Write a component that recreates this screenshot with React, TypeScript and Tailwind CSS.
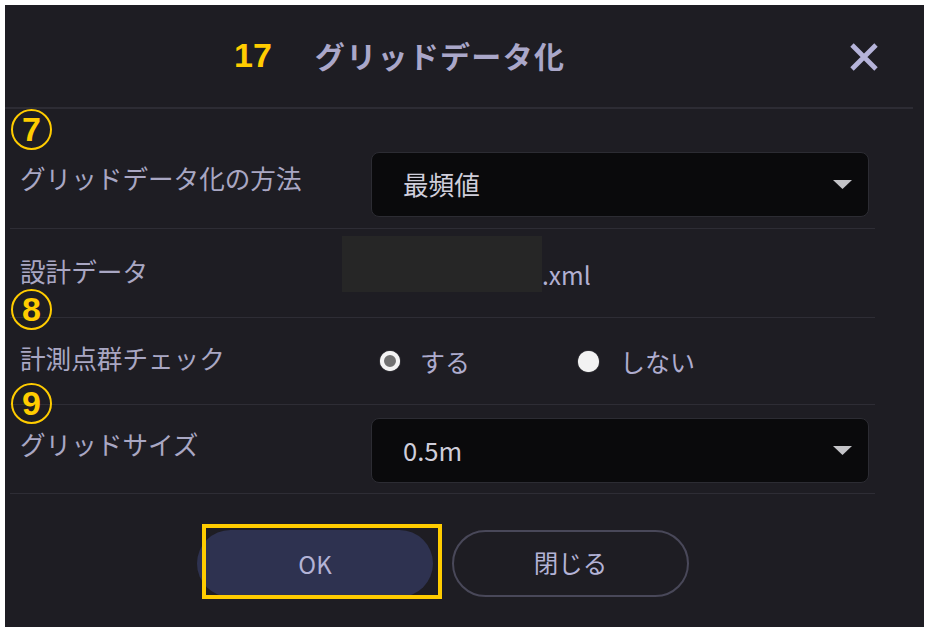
import React from "react";

const JP = { fontFamily: '"Noto Sans CJK JP", "Noto Sans", sans-serif' };

function Circled({ n, top }: { n: string; top: string }) {
  return (
    <div
      className={`absolute left-[6px] ${top} w-[41px] h-[41px] rounded-full border-2 border-[#ffcc00] flex items-center justify-center text-[#ffcc00] text-[34px] font-bold leading-none`}
      style={{ fontFamily: '"Liberation Sans", Arial, sans-serif' }}
    >
      <span className="-mt-[1px]">{n}</span>
    </div>
  );
}

function Caret() {
  return (
    <svg width="19" height="9" viewBox="0 0 19 9" className="shrink-0">
      <polygon points="0,0 19,0 9.5,9" fill="#c4c4c8" />
    </svg>
  );
}

function Select({ value }: { value: string }) {
  return (
    <div className="w-[498px] h-[65px] rounded-[8px] border border-[#2c2c33] bg-[#0a0a0c] flex items-center pl-[31px] pr-[16px]">
      <span className="flex-1 text-[25.6px] text-[#cfcedb] leading-none">{value}</span>
      <Caret />
    </div>
  );
}

export default function App() {
  return (
    <div className="w-[929px] h-[631px] bg-white pt-[5px] pl-[5px]" style={JP}>
      <div className="relative w-[919px] h-[622px] bg-[#1e1d23] flex flex-col">
        {/* header */}
        <div className="h-[104px] shrink-0 mr-[11px] border-b-2 border-[#2d2c34] flex items-center pl-[229px] pb-[3px]">
          <span
            className="text-[#ffcc00] text-[34px] font-bold leading-none"
            style={{ fontFamily: '"Liberation Sans", Arial, sans-serif' }}
          >
            17
          </span>
          <span className="ml-[43px] text-[#aaa7c9] text-[30px] font-bold leading-none tracking-[1.3px]">
            グリッドデータ化
          </span>
          <div className="flex-1" />
          <svg width="32" height="32" viewBox="0 0 32 32" className="mr-[33px] mt-[4px]">
            <path d="M4 4 L28 28 M28 4 L4 28" stroke="#b5b3d9" strokeWidth="4.8" strokeLinecap="butt" />
          </svg>
        </div>

        {/* rows */}
        <div className="ml-[5px] w-[865px] flex flex-col text-[#a9a7c3]">
          <div className="h-[120px] border-b border-[#2e2d35] flex items-center pt-[31px] pl-[10px]">
            <span className="w-[351px] text-[25.6px] leading-none mb-[12px]">グリッドデータ化の方法</span>
            <Select value="最頻値" />
          </div>

          <div className="h-[89px] border-b border-[#2e2d35] flex items-center pl-[10px]">
            <span className="w-[322px] text-[25.6px] leading-none mb-[5px]">設計データ</span>
            <div className="w-[200px] h-[56px] bg-[#262626] mb-[19px]" />
            <span className="text-[24.5px] leading-none text-[#b2b0d2] mt-[4px]">.xml</span>
          </div>

          <div className="h-[87px] border-b border-[#2e2d35] flex items-center pl-[10px]">
            <span className="w-[360px] text-[25.6px] leading-none mb-[7px]">計測点群チェック</span>
            <div className="flex items-center">
              <span className="w-[20px] h-[20px] rounded-full bg-[#727272] border-[4px] border-[#f4f4f4] shadow-[0_0_1px_#fff]" />
              <span className="ml-[20px] text-[25px] leading-none text-[#aeacce]">する</span>
            </div>
            <div className="flex items-center ml-[108px]">
              <span className="w-[21px] h-[21px] rounded-full bg-[#f2f2f2] shadow-[0_0_1px_#fff]" />
              <span className="ml-[21px] text-[25px] leading-none text-[#aeacce]">しない</span>
            </div>
          </div>

          <div className="h-[89px] border-b border-[#2e2d35] flex items-center pl-[10px] pt-[2px]">
            <span className="w-[351px] text-[25.6px] leading-none mb-[12px]">グリッドサイズ</span>
            <Select value="0.5m" />
          </div>
        </div>

        {/* buttons */}
        <div className="flex justify-center gap-[19px] pt-[36px] pr-[43px]">
          <button className="w-[236px] h-[67px] rounded-full bg-[#2e3250] text-[#b3b3d6] text-[24px] leading-none">
            OK
          </button>
          <button className="w-[237px] h-[67px] rounded-full border-2 border-[#494859] text-[#b3b3d6] text-[24.5px] leading-none">
            閉じる
          </button>
        </div>

        {/* annotations */}
        <Circled n="7" top="top-[104px]" />
        <Circled n="8" top="top-[284px]" />
        <Circled n="9" top="top-[378px]" />
        <div className="absolute left-[197px] top-[519px] w-[240px] h-[75px] border-[4px] border-[#ffcc00] pointer-events-none" />
      </div>
    </div>
  );
}
